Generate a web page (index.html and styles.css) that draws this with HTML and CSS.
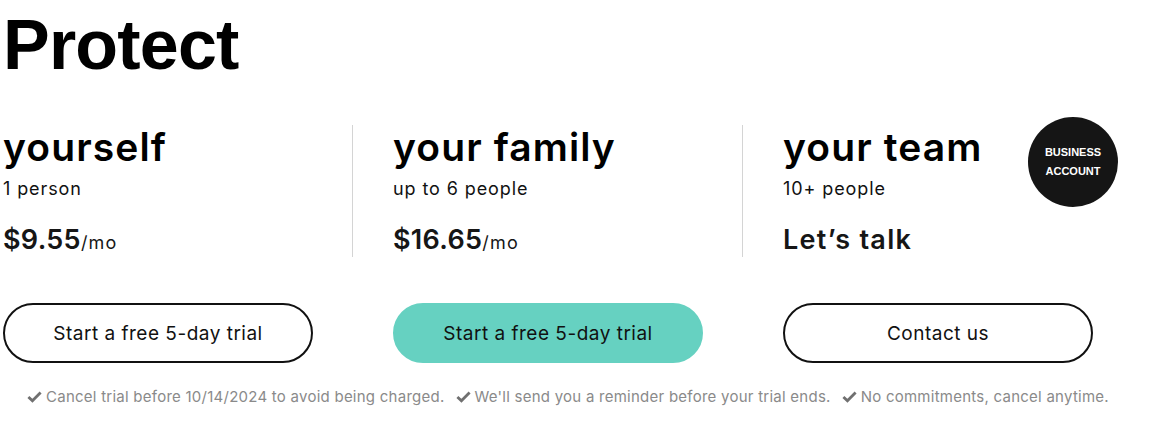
FILE: index.html
```html
<!DOCTYPE html>
<html>
<head>
<meta charset="utf-8">
<link rel="stylesheet" href="styles.css">
</head>
<body>
<div class="page">
  <h1 class="title">Protect</h1>
  <div class="plans">
    <div class="plan">
      <div class="info">
        <h2 class="name">yourself</h2>
        <div class="who">1 person</div>
        <div class="price">$9.55<span class="per">/mo</span></div>
      </div>
      <a class="btn">Start a free 5-day trial</a>
    </div>
    <div class="plan">
      <div class="info">
        <h2 class="name">your family</h2>
        <div class="who">up to 6 people</div>
        <div class="price">$16.65<span class="per">/mo</span></div>
      </div>
      <a class="btn btn-primary">Start a free 5-day trial</a>
    </div>
    <div class="plan last">
      <div class="info">
        <h2 class="name">your team</h2>
        <div class="who">10+ people</div>
        <div class="price talk">Let’s talk</div>
        <div class="badge">BUSINESS<br>ACCOUNT</div>
      </div>
      <a class="btn">Contact us</a>
    </div>
  </div>
  <div class="notes">
    <span class="note"><svg class="check" viewBox="0 0 16 16"><path d="M1.5 8.5 L5.8 12.6 L14.5 3.8" fill="none" stroke="currentColor" stroke-width="3"/></svg>Cancel trial before 10/14/2024 to avoid being charged.</span>
    <span class="note"><svg class="check" viewBox="0 0 16 16"><path d="M1.5 8.5 L5.8 12.6 L14.5 3.8" fill="none" stroke="currentColor" stroke-width="3"/></svg>We'll send you a reminder before your trial ends.</span>
    <span class="note"><svg class="check" viewBox="0 0 16 16"><path d="M1.5 8.5 L5.8 12.6 L14.5 3.8" fill="none" stroke="currentColor" stroke-width="3"/></svg>No commitments, cancel anytime.</span>
  </div>
</div>
</body>
</html>
```

FILE: styles.css
```css
* { box-sizing: border-box; }
html, body { margin: 0; padding: 0; background: #fff; }
body { font-family: "Inter", "Liberation Sans", sans-serif; color: #111; }
.page { padding: 0 0 0 3px; width: 1161px; }
.title {
  font-family: "Liberation Sans", Arial, sans-serif;
  font-weight: 700;
  font-size: 70px;
  letter-spacing: -0.8px;
  line-height: 1;
  margin: 0;
  padding-top: 10px;
  color: #000;
}
.plans {
  display: grid;
  grid-template-columns: 350px 350px 350px;
  column-gap: 40px;
  margin-top: 45px;
}
.plan { display: flex; flex-direction: column; }
.info {
  position: relative;
  border-right: 1px solid #d4d4d4;
  height: 132px;
}
.last .info { border-right: none; }
.name {
  margin: 0;
  padding-top: 2px;
  font-size: 39px;
  font-weight: 600;
  line-height: 40px;
  letter-spacing: 1.1px;
  color: #000;
}
.who {
  font-size: 18px;
  line-height: 22px;
  margin-top: 11px;
  letter-spacing: 0.9px;
  color: #111;
}
.price {
  font-size: 27px;
  font-weight: 600;
  margin-top: 25px;
  line-height: 30px;
  letter-spacing: 0.3px;
  color: #161616;
}
.talk { letter-spacing: 1.3px; }
.per { font-size: 18px; font-weight: 400; letter-spacing: 1.2px; }
.badge {
  position: absolute;
  left: 245px;
  top: -8px;
  width: 90px;
  height: 90px;
  border-radius: 50%;
  background: #151515;
  color: #fff;
  font-family: "Liberation Sans", Arial, sans-serif;
  font-weight: 700;
  font-size: 11px;
  line-height: 19px;
  display: flex;
  align-items: center;
  justify-content: center;
  text-align: center;
}
.btn {
  margin-top: 46px;
  width: 310px;
  height: 60px;
  border-radius: 30px;
  border: 2px solid #111;
  display: flex;
  align-items: center;
  justify-content: center;
  font-size: 19px;
  letter-spacing: 0.5px;
  color: #111;
}
.btn-primary { background: #66d1c1; border-color: #66d1c1; }
.notes {
  display: flex;
  gap: 11px;
  margin-top: 24px;
  padding-left: 24px;
  font-size: 15px;
  letter-spacing: 0.25px;
  color: #8a8a8a;
}
.note { display: inline-flex; align-items: center; white-space: nowrap; }
.check { width: 15px; height: 15px; margin-right: 4px; color: #707070; }
```
